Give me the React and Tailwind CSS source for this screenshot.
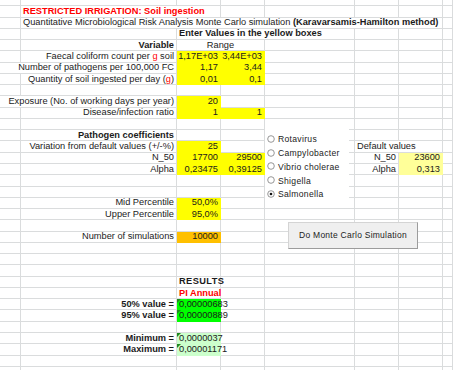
import React from "react";

const FILL = {
  Y: "bg-[#ffff00] border-[#ffff00]",
  LY: "bg-[#ffff99] border-[#ffff99]",
  O: "bg-[#ffc000] border-[#ffc000]",
  G: "bg-[#00ff00] border-[#00ff00]",
  LG: "bg-[#ccffcc] border-[#ccffcc]",
};
const SPAN = { 1: "", 2: "col-span-2", 3: "col-span-3", 6: "col-span-6" };
const ALIGN = {
  left: "justify-start pl-[2px]",
  right: "justify-end pr-[2px]",
  center: "justify-center",
};

const R = (t) => <span className="text-[#ff0000]">{t}</span>;

const ROWS = [
  [],
  [{ c: 1, span: 2, text: "RESTRICTED IRRIGATION: Soil ingestion", cls: "text-[#ff0000] font-bold" }],
  [
    {
      c: 1,
      span: 6,
      text: (
        <>
          Quantitative Microbiological Risk Analysis Monte Carlo simulation{" "}
          <b>(Karavarsamis-Hamilton method)</b>
        </>
      ),
    },
  ],
  [{ c: 2, span: 3, text: "Enter Values in the yellow boxes", cls: "font-bold" }],
  [
    { c: 1, text: "Variable", cls: "font-bold", align: "right" },
    { c: 2, span: 2, text: "Range", align: "center" },
  ],
  [
    { c: 1, text: <>Faecal coliform count per {R("g")} soil</>, align: "right" },
    { c: 2, text: "1,17E+03", fill: "Y", align: "right" },
    { c: 3, text: "3,44E+03", fill: "Y", align: "right" },
  ],
  [
    { c: 0, span: 2, text: "Number of pathogens per 100,000 FC", align: "right" },
    { c: 2, text: "1,17", fill: "Y", align: "right" },
    { c: 3, text: "3,44", fill: "Y", align: "right" },
  ],
  [
    { c: 1, text: <>Quantity of soil ingested per day ({R("g")})</>, align: "right" },
    { c: 2, text: "0,01", fill: "Y", align: "right" },
    { c: 3, text: "0,1", fill: "Y", align: "right" },
  ],
  [],
  [
    { c: 0, span: 2, text: "Exposure (No. of working days per year)", align: "right" },
    { c: 2, text: "20", fill: "Y", align: "right" },
  ],
  [
    { c: 1, text: "Disease/infection ratio", align: "right" },
    { c: 2, text: "1", fill: "Y", align: "right" },
    { c: 3, text: "1", fill: "Y", align: "right" },
  ],
  [],
  [{ c: 1, text: "Pathogen coefficients", cls: "font-bold", align: "right" }],
  [
    { c: 1, text: "Variation from default values (+/-%)", align: "right" },
    { c: 2, text: "25", fill: "Y", align: "right" },
    { c: 5, span: 2, text: "Default values" },
  ],
  [
    { c: 1, text: "N_50", align: "right" },
    { c: 2, text: "17700", fill: "Y", align: "right" },
    { c: 3, text: "29500", fill: "Y", align: "right" },
    { c: 5, text: "N_50", align: "right" },
    { c: 6, text: "23600", fill: "LY", align: "right" },
  ],
  [
    { c: 1, text: "Alpha", align: "right" },
    { c: 2, text: "0,23475", fill: "Y", align: "right" },
    { c: 3, text: "0,39125", fill: "Y", align: "right" },
    { c: 5, text: "Alpha", align: "right" },
    { c: 6, text: "0,313", fill: "LY", align: "right" },
  ],
  [],
  [],
  [
    { c: 1, text: "Mid Percentile", align: "right" },
    { c: 2, text: "50,0%", fill: "Y", align: "right" },
  ],
  [
    { c: 1, text: "Upper Percentile", align: "right" },
    { c: 2, text: "95,0%", fill: "Y", align: "right" },
  ],
  [],
  [
    { c: 1, text: "Number of simulations", align: "right" },
    { c: 2, text: "10000", fill: "O", align: "right" },
  ],
  [],
  [],
  [],
  [{ c: 2, text: "RESULTS", cls: "font-bold tracking-[0.4px]" }],
  [{ c: 2, text: "PI Annual", cls: "font-bold text-[#ff0000]" }],
  [
    { c: 1, text: "50% value =", cls: "font-bold", align: "right" },
    { c: 2, text: "0,00000683", fill: "G", tri: true },
  ],
  [
    { c: 1, text: "95% value =", cls: "font-bold", align: "right" },
    { c: 2, text: "0,00000889", fill: "G", tri: true },
  ],
  [],
  [
    { c: 1, text: "Minimum =", cls: "font-bold", align: "right" },
    { c: 2, text: "0,0000037", fill: "LG", tri: true },
  ],
  [
    { c: 1, text: "Maximum =", cls: "font-bold", align: "right" },
    { c: 2, text: "0,00001171", fill: "LG", tri: true },
  ],
  [],
  [],
];

function Cell({ cell }) {
  const { span = 1, text, align = "left", cls = "", fill, tri } = cell;
  const fillCls = FILL[fill] || "border-[#dadcdd]";
  return (
    <div
      className={`relative flex items-center whitespace-nowrap border-r border-b ${fillCls} ${SPAN[span]} ${ALIGN[align]} ${cls}`}
    >
      {tri && (
        <svg className="absolute left-0 top-0" width="4" height="4" viewBox="0 0 4 4">
          <polygon points="0,0 4,0 0,4" fill="#1f8a1f" />
        </svg>
      )}
      {text != null && <span className="relative z-10">{text}</span>}
    </div>
  );
}

function Row({ cells }) {
  const out = [];
  let col = 0;
  const sorted = [...cells].sort((a, b) => a.c - b.c);
  let key = 0;
  for (const cell of sorted) {
    while (col < cell.c) {
      out.push(<Cell key={key++} cell={{}} />);
      col++;
    }
    out.push(<Cell key={key++} cell={cell} />);
    col += cell.span || 1;
  }
  while (col < 8) {
    out.push(<Cell key={key++} cell={{}} />);
    col++;
  }
  return <>{out}</>;
}

function Radio({ label, checked }) {
  return (
    <div className="flex h-[13.75px] items-center gap-[3px]">
      <svg width="8" height="8" viewBox="0 0 8 8" className="shrink-0 -mt-[2px]">
        <circle cx="4" cy="4" r="3.3" fill="#fff" stroke="#8a8a8a" strokeWidth="0.9" />
        {checked && <circle cx="4" cy="4" r="1.3" fill="#111" />}
      </svg>
      <span className="tracking-[0.3px]">{label}</span>
    </div>
  );
}

export default function App() {
  return (
    <div className="relative h-[370px] w-[453px] overflow-hidden bg-white font-['Liberation_Sans',Arial,sans-serif] text-[9.25px] leading-[11px] text-[#1b1b1b]">
      <div className="grid grid-cols-[21px_156px_44px_44px_90px_44px_44px_1fr] grid-rows-[6.3px_repeat(34,11.27px)]">
        {ROWS.map((cells, i) => (
          <Row key={i} cells={cells} />
        ))}
      </div>

      <div className="absolute left-[265px] top-[129px] h-[73px] w-[84px] bg-white pl-[2px] pt-[4px] text-[8.6px]">
        <Radio label="Rotavirus" />
        <Radio label="Campylobacter" />
        <Radio label="Vibrio cholerae" />
        <Radio label="Shigella" />
        <Radio label="Salmonella" checked />
      </div>

      <div className="absolute left-[288px] top-[222px] flex h-[27px] w-[130px] items-center justify-center border border-[#d4d4d4] border-b-[#9c9c9c] border-r-[#9c9c9c] bg-[#efefef] text-[8.5px] tracking-[0.25px] text-[#222]">
        Do Monte Carlo Simulation
      </div>
    </div>
  );
}
